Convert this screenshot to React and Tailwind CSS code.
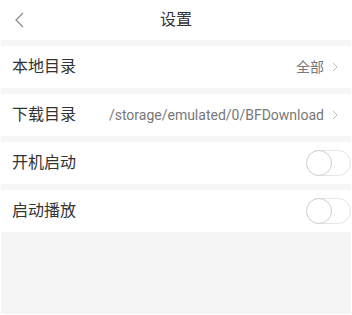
import React from 'react';

const font = { fontFamily: 'Roboto, "Noto Sans CJK SC", sans-serif' };

function Chevron() {
  return (
    <svg width="6" height="10" viewBox="0 0 6 10" className="ml-[8px]">
      <path d="M1 1 L5 5 L1 9" fill="none" stroke="#bdbdbd" strokeWidth="1" />
    </svg>
  );
}

function Toggle() {
  return (
    <div className="relative w-[45px] h-[26px] rounded-full border border-[#e6e6e6] bg-white">
      <div className="absolute left-[-1px] top-[-1px] w-[26px] h-[26px] rounded-full border border-[#cfcfcf] bg-white" />
    </div>
  );
}

function Row({ label, children }) {
  return (
    <div className="flex items-center justify-between h-[42px] bg-white pl-[11px] pr-[13px]">
      <span className="text-[16px] text-[#333]">{label}</span>
      {children}
    </div>
  );
}

export default function App() {
  return (
    <div className="w-[352px] h-[315px] bg-white px-[1px] pb-[1px] flex flex-col" style={font}>
      <div className="relative flex items-center justify-center h-[40px] bg-white">
        <svg width="10" height="16" viewBox="0 0 10 16" className="absolute left-[13px] top-[12px]">
          <path d="M9 1 L2 8 L9 15" fill="none" stroke="#8a8a8a" strokeWidth="1.2" />
        </svg>
        <span className="text-[16px] text-[#333]">设置</span>
      </div>
      <div className="flex-1 bg-[#f5f5f5] flex flex-col gap-[6px] pt-[6px]">
        <Row label="本地目录">
          <div className="flex items-center">
            <span className="text-[14px] text-[#777]">全部</span>
            <Chevron />
          </div>
        </Row>
        <Row label="下载目录">
          <div className="flex items-center">
            <span className="text-[14px] text-[#777]">/storage/emulated/0/BFDownload</span>
            <Chevron />
          </div>
        </Row>
        <div className="flex items-center justify-between h-[42px] bg-white pl-[11px]">
          <span className="text-[16px] text-[#333]">开机启动</span>
          <Toggle />
        </div>
        <div className="flex items-center justify-between h-[42px] bg-white pl-[11px]">
          <span className="text-[16px] text-[#333]">启动播放</span>
          <Toggle />
        </div>
      </div>
    </div>
  );
}
